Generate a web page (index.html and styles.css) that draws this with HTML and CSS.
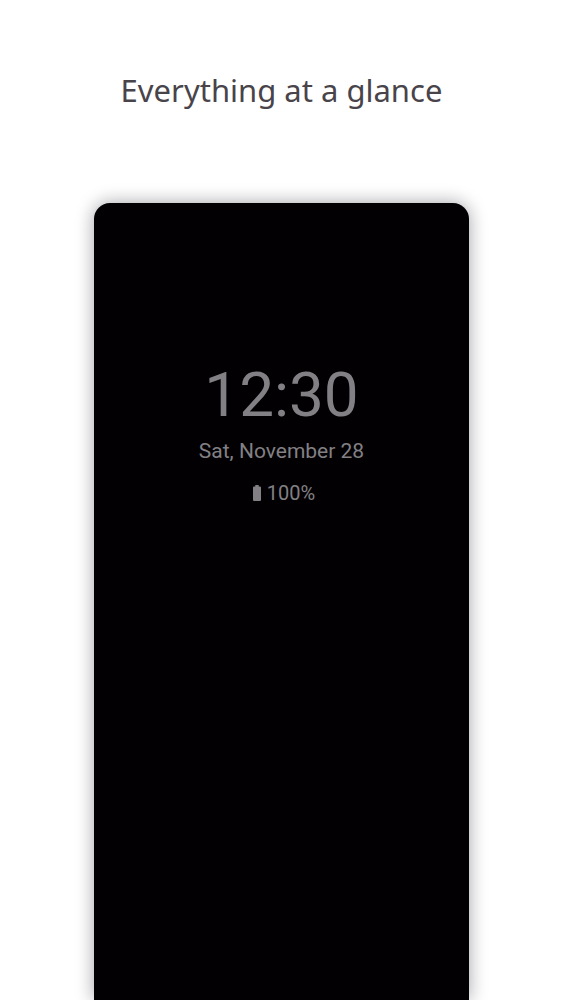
FILE: index.html
```html
<!DOCTYPE html>
<html lang="en">
<head>
<meta charset="utf-8">
<meta name="viewport" content="width=device-width, initial-scale=1">
<title>Everything at a glance</title>
<link rel="stylesheet" href="styles.css">
</head>
<body>
<main class="showcase">
  <h1 class="headline">Everything at a glance</h1>
  <section class="phone" aria-label="Lock screen">
    <time class="clock">12:30</time>
    <p class="date">Sat, November 28</p>
    <p class="battery">
      <svg class="battery-icon" viewBox="0 0 14 18" aria-hidden="true"><path d="M7.300 1h3.400v1.500h1.300a1 1 0 0 1 1 1v12.500a1 1 0 0 1-1 1h-6a1 1 0 0 1-1-1v-12.500a1 1 0 0 1 1-1h1.300z"/></svg>
      <span>100%</span>
    </p>
  </section>
</main>
</body>
</html>
```

FILE: styles.css
```css
* {
  box-sizing: border-box;
  margin: 0;
}

body {
  background: #fff;
}

.showcase {
  display: flex;
  flex-direction: column;
  align-items: center;
  min-height: 100vh;
  padding-top: 68px;
}

.headline {
  margin-bottom: 91px;
  color: #48444a;
  font: 400 31px/44px "Noto Sans", "Open Sans", sans-serif;
  text-align: center;
}

.phone {
  display: flex;
  flex: 1;
  flex-direction: column;
  align-items: center;
  width: 66.6%;
  padding-top: 156px;
  border-radius: 16px 16px 0 0;
  background: #020003;
  box-shadow: 0 0 18px rgba(20, 15, 30, 0.4);
  color: #828084;
  font-family: Roboto, sans-serif;
}

.clock {
  font-size: 62px;
  line-height: 72px;
}

.date {
  margin-top: 7px;
  font-size: 21px;
  line-height: 26px;
}

.battery {
  display: flex;
  align-items: center;
  gap: 5px;
  margin-top: 16px;
  font-size: 20px;
  line-height: 26px;
}

.battery-icon {
  width: 14px;
  height: 18px;
  fill: currentColor;
}
```
